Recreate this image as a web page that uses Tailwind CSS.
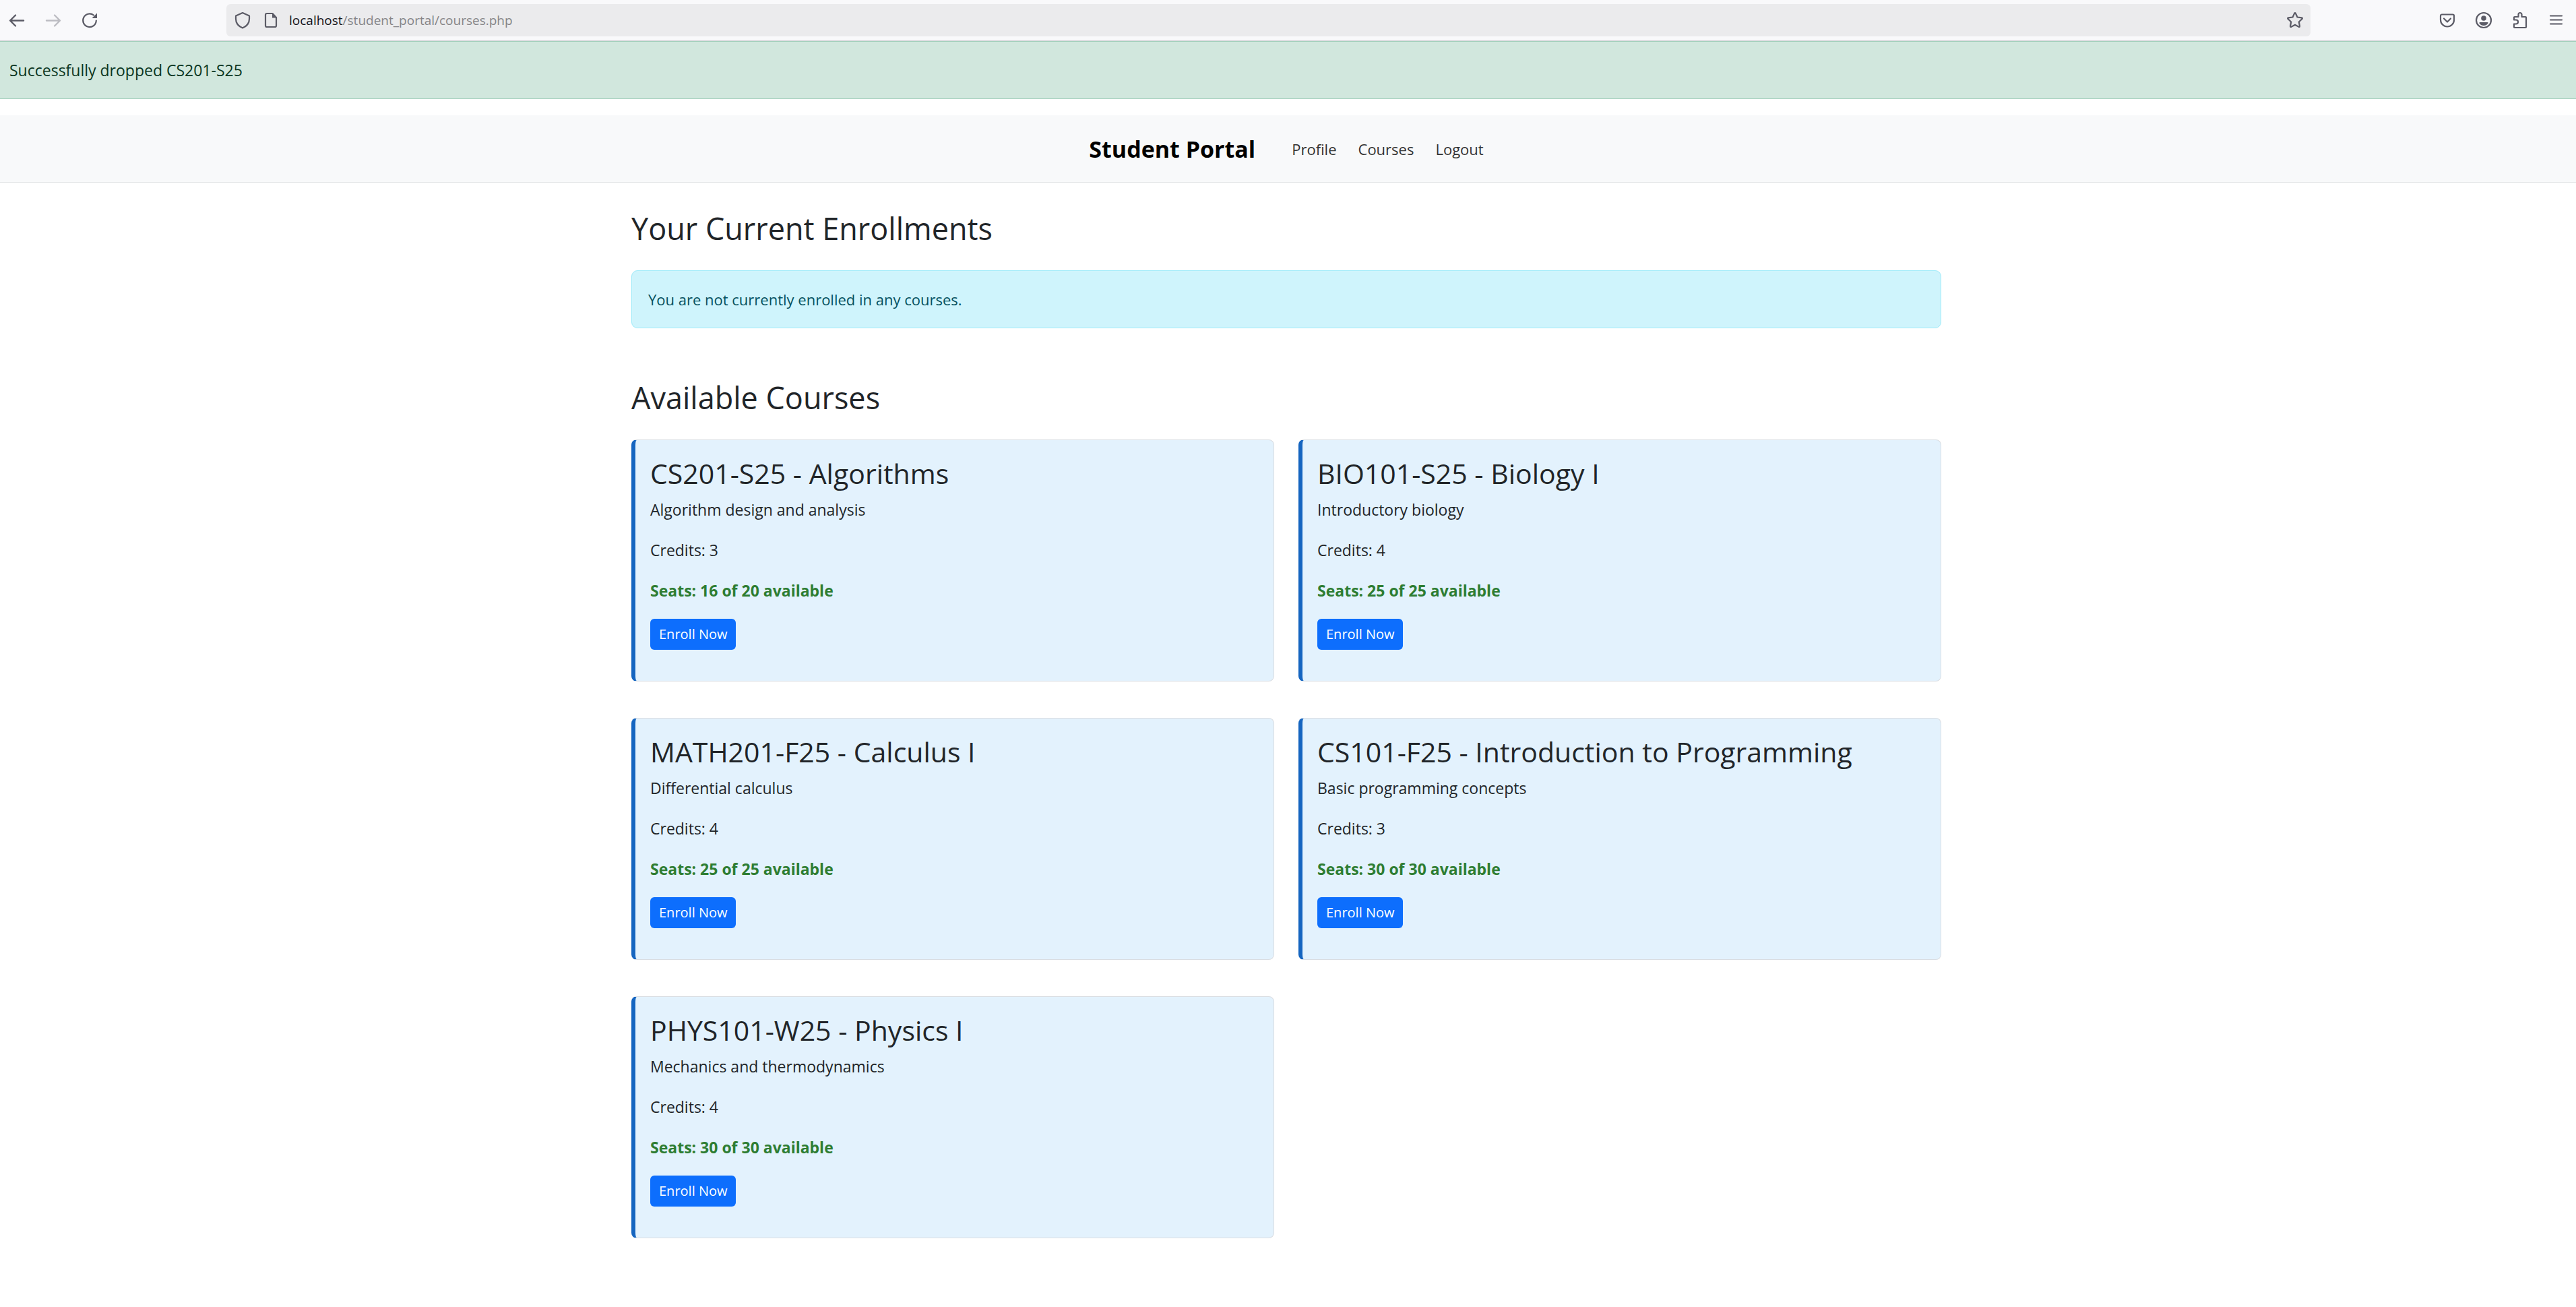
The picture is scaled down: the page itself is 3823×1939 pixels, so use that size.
<!DOCTYPE html>
<html lang="en">
<head>
<meta charset="utf-8">
<title>Student Portal - Courses</title>
<script src="https://cdn.jsdelivr.net/npm/@tailwindcss/browser@4"></script>
</head>
<body class="bg-white font-['Open_Sans',sans-serif] text-[23px] leading-9 text-[#212529]">

<!-- Browser toolbar -->
<header class="flex h-[61px] items-center border-b border-[#ccccd1] bg-[#f9f9fb] pr-4 pl-3 text-[#5b5b66]">
  <div class="flex w-[324px] shrink-0 items-center gap-[28px]">
    <button type="button" aria-label="Back" class="size-[26px]"><svg viewBox="0 0 26 26" class="size-full" fill="none" stroke="currentColor" stroke-width="2.4" stroke-linecap="round" stroke-linejoin="round"><path d="M23 13.500H3.500M11 5.500l-8 8 8 8"/></svg></button>
    <button type="button" aria-label="Forward" disabled class="size-[26px] text-[#bcbcc2]"><svg viewBox="0 0 26 26" class="size-full" fill="none" stroke="currentColor" stroke-width="2.4" stroke-linecap="round" stroke-linejoin="round"><path d="M3 13.500h19.500M15 5.500l8 8-8 8"/></svg></button>
    <button type="button" aria-label="Reload" class="size-[26px]"><svg viewBox="0 0 26 26" class="size-full" fill="none" stroke="currentColor" stroke-width="2.2" stroke-linecap="round"><path d="M22.800 13.500A9.800 9.800 0 1 1 19 5.500"/><path d="M24 2.500v7.500h-7.500z" fill="currentColor" stroke="none"/></svg></button>
  </div>
  <div class="flex h-12 flex-1 items-center rounded-md bg-[#ebebed] pr-[10px] pl-3">
    <svg viewBox="0 0 24 26" class="h-[26px] w-6" fill="none" stroke="currentColor" stroke-width="2.2" stroke-linejoin="round"><path d="M12 2l10 4.500v4.500c0 6-4 11-10 13.500C6 22 2 17 2 11V6.500z"/></svg>
    <svg viewBox="0 0 20 24" class="ml-5 h-6 w-5" fill="none" stroke="currentColor" stroke-width="2.2" stroke-linejoin="round"><path d="M12.500 2H4a2 2 0 0 0-2 2v16a2 2 0 0 0 2 2h12a2 2 0 0 0 2-2V8z"/><path d="M12 2v6.500h6.500z" fill="currentColor" stroke="none"/></svg>
    <span class="ml-[17px] flex-1 text-[19px] text-[#858588]"><span class="text-[#15141a]">localhost</span>/student_portal/courses.php</span>
    <button type="button" aria-label="Bookmark this page" class="size-[26px]"><svg viewBox="0 0 26 26" class="size-full" fill="none" stroke="currentColor" stroke-width="2.2" stroke-linejoin="round"><path d="M12.200 2.800q.8-1.400 1.600 0l2.700 5.700 6.500.9q1.500.4.500 1.600l-4.700 4.500 1.200 6.300q0 1.500-1.400 1.100L13 19.800l-5.600 3.100q-1.400.4-1.400-1.100l1.200-6.300L2.500 11q-1-1.200.5-1.600l6.500-.9z"/></svg></button>
  </div>
  <div class="flex w-[378px] shrink-0 items-center justify-end gap-[28px]">
    <button type="button" aria-label="Pocket" class="size-[26px]"><svg viewBox="0 0 26 26" class="size-full" fill="none" stroke="currentColor" stroke-width="2.2" stroke-linecap="round" stroke-linejoin="round"><path d="M5 4.500h16a2 2 0 0 1 2 2v6a10 10 0 0 1-20 0v-6a2 2 0 0 1 2-2zM8 10.500l5 5 5-5"/></svg></button>
    <button type="button" aria-label="Account" class="size-[26px]"><svg viewBox="0 0 26 26" class="size-full" fill="currentColor"><circle cx="13" cy="13" r="11" fill="none" stroke="currentColor" stroke-width="2.2"/><circle cx="13" cy="10" r="3.800"/><path d="M7.500 16h11a1 1 0 0 1 1 1.500c-1.500 2.500-4 3.500-6.500 3.500s-5-1-6.500-3.500a1 1 0 0 1 1-1.500z"/></svg></button>
    <button type="button" aria-label="Extensions" class="size-[26px]"><svg viewBox="0 0 26 26" class="size-full" fill="none" stroke="currentColor" stroke-width="2.2" stroke-linejoin="round"><path d="M4 12.500V9a1 1 0 0 1 1-1h5.500V4.500a2.500 2.500 0 0 1 5 0V8H21a1 1 0 0 1 1 1v14a1 1 0 0 1-1 1H5a1 1 0 0 1-1-1v-4.500h3a3 3 0 0 0 0-6z"/></svg></button>
    <button type="button" aria-label="Open menu" class="size-[26px]"><svg viewBox="0 0 26 26" class="size-full" fill="none" stroke="currentColor" stroke-width="2.2" stroke-linecap="round"><path d="M4 6.500h17M4 12.500h17M4 18.500h17"/></svg></button>
  </div>
</header>

<div role="alert" class="border-y border-[#a3cfbb] bg-[#d1e7dd] px-[14px] py-6 text-[#0a3622]">Successfully dropped CS201-S25</div>

<nav class="mt-6 flex h-[100px] items-center justify-center border-b border-[#e3e5e7] bg-[#f8f9fa] pr-[5px] text-[22px] text-[#333]">
  <a href="#" class="mr-[54px] text-[34px] leading-[50px] font-bold text-black">Student Portal</a>
  <ul class="flex gap-8">
    <li><a href="#">Profile</a></li>
    <li><a href="#">Courses</a></li>
    <li><a href="#">Logout</a></li>
  </ul>
</nav>

<div class="pr-[5px]">
<main class="mx-auto max-w-[1944px] pt-[39px] pb-[102px]">
  <section>
    <h2 class="mb-[33px] text-[45px] leading-[58px]">Your Current Enrollments</h2>
    <div class="rounded-[9px] border border-[#9eeaf9] bg-[#cff4fc] px-6 py-6 text-[22px] text-[#055160]">You are not currently enrolled in any courses.</div>
  </section>
  <section class="mt-[74px]">
    <h2 class="mb-[33px] text-[45px] leading-[58px]">Available Courses</h2>
    <div class="grid grid-cols-2 gap-x-9 gap-y-[54px]">
      <article class="rounded-lg border border-l-[6px] border-[#d9dde2] border-l-[#1565c0] bg-[#e3f2fd] px-[22px] pt-[23px] pb-[22px]">
        <h3 class="mb-[10px] text-[41px] leading-[52px]">CS201-S25 - Algorithms</h3>
        <p class="mb-6">Algorithm design and analysis</p>
        <p class="mb-6">Credits: 3</p>
        <p class="mb-6 font-bold text-[#2e7d32]">Seats: 16 of 20 available</p>
        <button type="button" class="mb-6 block h-[46px] rounded-md bg-[#0d6efd] px-[13px] text-[20px] text-white">Enroll Now</button>
      </article>
      <article class="rounded-lg border border-l-[6px] border-[#d9dde2] border-l-[#1565c0] bg-[#e3f2fd] px-[22px] pt-[23px] pb-[22px]">
        <h3 class="mb-[10px] text-[41px] leading-[52px]">BIO101-S25 - Biology I</h3>
        <p class="mb-6">Introductory biology</p>
        <p class="mb-6">Credits: 4</p>
        <p class="mb-6 font-bold text-[#2e7d32]">Seats: 25 of 25 available</p>
        <button type="button" class="mb-6 block h-[46px] rounded-md bg-[#0d6efd] px-[13px] text-[20px] text-white">Enroll Now</button>
      </article>
      <article class="rounded-lg border border-l-[6px] border-[#d9dde2] border-l-[#1565c0] bg-[#e3f2fd] px-[22px] pt-[23px] pb-[22px]">
        <h3 class="mb-[10px] text-[41px] leading-[52px]">MATH201-F25 - Calculus I</h3>
        <p class="mb-6">Differential calculus</p>
        <p class="mb-6">Credits: 4</p>
        <p class="mb-6 font-bold text-[#2e7d32]">Seats: 25 of 25 available</p>
        <button type="button" class="mb-6 block h-[46px] rounded-md bg-[#0d6efd] px-[13px] text-[20px] text-white">Enroll Now</button>
      </article>
      <article class="rounded-lg border border-l-[6px] border-[#d9dde2] border-l-[#1565c0] bg-[#e3f2fd] px-[22px] pt-[23px] pb-[22px]">
        <h3 class="mb-[10px] text-[41px] leading-[52px]">CS101-F25 - Introduction to Programming</h3>
        <p class="mb-6">Basic programming concepts</p>
        <p class="mb-6">Credits: 3</p>
        <p class="mb-6 font-bold text-[#2e7d32]">Seats: 30 of 30 available</p>
        <button type="button" class="mb-6 block h-[46px] rounded-md bg-[#0d6efd] px-[13px] text-[20px] text-white">Enroll Now</button>
      </article>
      <article class="rounded-lg border border-l-[6px] border-[#d9dde2] border-l-[#1565c0] bg-[#e3f2fd] px-[22px] pt-[23px] pb-[22px]">
        <h3 class="mb-[10px] text-[41px] leading-[52px]">PHYS101-W25 - Physics I</h3>
        <p class="mb-6">Mechanics and thermodynamics</p>
        <p class="mb-6">Credits: 4</p>
        <p class="mb-6 font-bold text-[#2e7d32]">Seats: 30 of 30 available</p>
        <button type="button" class="mb-6 block h-[46px] rounded-md bg-[#0d6efd] px-[13px] text-[20px] text-white">Enroll Now</button>
      </article>
    </div>
  </section>
</main>
</div>
</body>
</html>
